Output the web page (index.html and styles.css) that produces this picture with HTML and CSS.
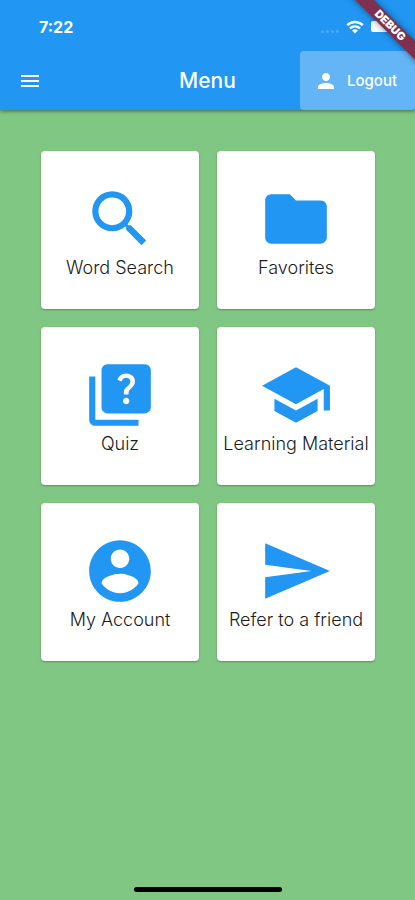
FILE: index.html
```html
<!DOCTYPE html>
<html lang="en">
<head>
<meta charset="utf-8">
<meta name="viewport" content="width=device-width, initial-scale=1">
<title>Menu</title>
<link rel="stylesheet" href="styles.css">
</head>
<body>
<div class="screen">
  <header class="header">
    <div class="status">
      <span class="time">7:22</span>
      <div class="indicators">
        <span class="cell"><i></i><i></i><i></i><i></i></span>
        <svg class="wifi" viewBox="0 0 18 14" aria-hidden="true">
          <path d="M1.2 5.2a11.2 11.2 0 0 1 15.6 0M4 8.4a7.2 7.2 0 0 1 10 0" fill="none" stroke="currentColor" stroke-width="2.4"/>
          <path d="M9 13.6 6 10.5a4.2 4.2 0 0 1 6 0z" fill="currentColor"/>
        </svg>
        <span class="battery"></span>
      </div>
    </div>
    <div class="appbar">
      <button class="menu-button" type="button" aria-label="Open navigation">
        <svg viewBox="0 0 24 24"><path d="M3 18h18v-2H3v2zm0-5h18v-2H3v2zm0-7v2h18V6H3z"/></svg>
      </button>
      <h1 class="title">Menu</h1>
      <button class="logout" type="button">
        <svg viewBox="0 0 24 24" aria-hidden="true"><path d="M12 12c2.21 0 4-1.79 4-4s-1.79-4-4-4-4 1.79-4 4 1.79 4 4 4zm0 2c-2.67 0-8 1.34-8 4v2h16v-2c0-2.66-5.33-4-8-4z"/></svg>
        <span>Logout</span>
      </button>
    </div>
  </header>
  <main class="grid">
    <button class="card" type="button">
      <svg viewBox="0 0 24 24" aria-hidden="true"><path d="M15.5 14h-.79l-.28-.27A6.471 6.471 0 0 0 16 9.5 6.5 6.5 0 1 0 9.5 16c1.61 0 3.09-.59 4.23-1.57l.27.28v.79l5 4.99L20.49 19l-4.99-5zm-6 0C7.01 14 5 11.99 5 9.5S7.01 5 9.5 5 14 7.01 14 9.5 11.99 14 9.5 14z"/></svg>
      <span>Word Search</span>
    </button>
    <button class="card" type="button">
      <svg viewBox="0 0 24 24" aria-hidden="true"><path d="M10 4H4c-1.1 0-1.99.9-1.99 2L2 18c0 1.1.9 2 2 2h16c1.1 0 2-.9 2-2V8c0-1.1-.9-2-2-2h-8l-2-2z"/></svg>
      <span>Favorites</span>
    </button>
    <button class="card" type="button">
      <svg viewBox="0 0 24 24" aria-hidden="true"><path d="M4 6H2v14c0 1.1.9 2 2 2h14v-2H4V6zm16-4H8c-1.1 0-2 .9-2 2v12c0 1.1.9 2 2 2h12c1.1 0 2-.9 2-2V4c0-1.1-.9-2-2-2zm-5.99 13c-.59 0-1.05-.47-1.05-1.05 0-.59.47-1.04 1.05-1.04.59 0 1.04.45 1.04 1.04-.01.58-.45 1.05-1.04 1.05zm2.5-6.17c-.63.93-1.23 1.21-1.56 1.81-.13.24-.18.4-.18 1.18h-1.52c0-.41-.06-1.08.26-1.65.41-.73 1.18-1.16 1.63-1.8.48-.68.21-1.94-1.14-1.94-.88 0-1.32.67-1.5 1.23l-1.37-.57C11.51 5.96 12.52 5 13.99 5c1.23 0 2.08.56 2.51 1.26.37.6.58 1.73.01 2.57z"/></svg>
      <span>Quiz</span>
    </button>
    <button class="card" type="button">
      <svg viewBox="0 0 24 24" aria-hidden="true"><path d="M5 13.18v4L12 21l7-3.82v-4L12 17l-7-3.82zM12 3 1 9l11 6 9-4.91V17h2V9L12 3z"/></svg>
      <span>Learning Material</span>
    </button>
    <button class="card" type="button">
      <svg viewBox="0 0 24 24" aria-hidden="true"><path d="M12 2C6.48 2 2 6.48 2 12s4.48 10 10 10 10-4.48 10-10S17.52 2 12 2zm0 3c1.66 0 3 1.34 3 3s-1.34 3-3 3-3-1.34-3-3 1.34-3 3-3zm0 14.2c-2.5 0-4.71-1.28-6-3.22.03-1.99 4-3.08 6-3.08 1.99 0 5.97 1.09 6 3.08-1.29 1.94-3.5 3.22-6 3.22z"/></svg>
      <span>My Account</span>
    </button>
    <button class="card" type="button">
      <svg viewBox="0 0 24 24" aria-hidden="true"><path d="M2 3v7l15 2-15 2v7l21-9z"/></svg>
      <span>Refer to a friend</span>
    </button>
  </main>
  <div class="home-indicator"></div>
  <div class="banner">DEBUG</div>
</div>
</body>
</html>
```
FILE: styles.css
```css
* {
  box-sizing: border-box;
}

body {
  margin: 0;
  font-family: Inter, "Liberation Sans", sans-serif;
  background: #81c784;
}

button {
  border: 0;
  padding: 0;
  font: inherit;
  cursor: pointer;
}

svg {
  display: block;
  fill: currentColor;
}

.screen {
  position: relative;
  display: flex;
  flex-direction: column;
  min-height: 100vh;
  overflow: hidden;
}

.header {
  background: #2196f3;
  color: #fff;
  box-shadow: 0 1px 4px rgba(0, 0, 0, 0.5);
}

.status {
  display: flex;
  align-items: center;
  justify-content: space-between;
  height: 51px;
  padding: 2px 20px 0 39px;
}

.time {
  font-size: 16px;
  font-weight: 700;
}

.indicators {
  display: flex;
  align-items: center;
  gap: 7px;
}

.cell {
  display: flex;
  gap: 2px;
  padding-top: 9px;
}

.cell i {
  width: 3px;
  height: 3px;
  border-radius: 2px;
  background: rgba(255, 255, 255, 0.2);
}

.wifi {
  width: 18px;
  height: 14px;
}

.battery {
  width: 24px;
  height: 11px;
  border-radius: 2px;
  background: #fff;
}

.appbar {
  display: grid;
  grid-template-columns: 115px 1fr 115px;
  align-items: center;
  height: 59px;
}

.menu-button {
  justify-self: start;
  margin-left: 18px;
  background: none;
  color: #fff;
}

.menu-button svg,
.logout svg {
  width: 24px;
  height: 24px;
}

.title {
  margin: 0;
  font-size: 21px;
  font-weight: 500;
  text-align: center;
}

.logout {
  display: flex;
  align-items: center;
  justify-content: center;
  gap: 9px;
  height: 100%;
  padding-right: 4px;
  border-radius: 4px;
  background: #64b5f6;
  color: #fff;
  font-size: 15px;
  font-weight: 500;
}

.grid {
  display: grid;
  grid-template-columns: 1fr 1fr;
  gap: 18px;
  padding: 41px 40px 41px 41px;
}

.card {
  display: flex;
  flex-direction: column;
  align-items: center;
  justify-content: center;
  gap: 1px;
  padding-top: 1px;
  aspect-ratio: 1;
  border-radius: 4px;
  background: #fff;
  box-shadow: 0 1px 2px rgba(0, 0, 0, 0.3);
  color: #1c1c1c;
  font-size: 18px;
  font-weight: 300;
  line-height: 22px;
  white-space: nowrap;
}

.card svg {
  width: 74px;
  height: 74px;
  color: #2196f3;
}

.home-indicator {
  width: 148px;
  height: 5px;
  margin: auto auto 8px;
  border-radius: 3px;
  background: #000;
}

.banner {
  position: absolute;
  top: 19px;
  right: -35px;
  width: 120px;
  height: 13px;
  background: #80304e;
  box-shadow: 0 0 6px rgba(0, 0, 0, 0.5);
  color: #fff;
  font-size: 11px;
  font-weight: 900;
  line-height: 13px;
  text-align: center;
  transform: rotate(45deg);
}
```
